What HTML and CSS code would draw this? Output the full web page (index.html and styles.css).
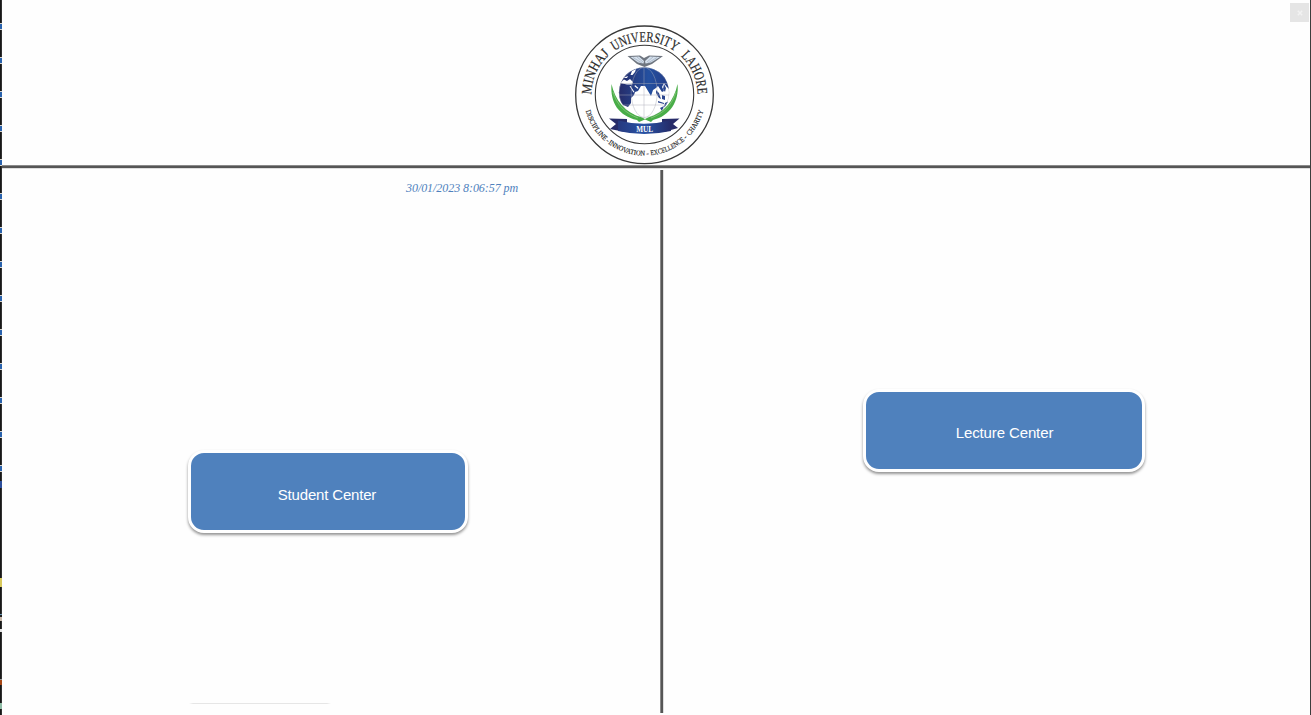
FILE: index.html
```html
<!DOCTYPE html>
<html lang="en">
<head>
<meta charset="utf-8">
<title>Minhaj University Lahore</title>
<link rel="stylesheet" href="styles.css">
</head>
<body>
<div class="edge-left">
  <div class="edge-ticks"></div>
  <i class="tick tick-blue"></i>
  <i class="tick tick-yellow"></i>
  <i class="tick tick-pink"></i>
  <i class="tick tick-white"></i>
  <i class="tick tick-brown"></i>
  <i class="tick tick-green"></i>
</div>
<div class="window">
  <header class="header">
    <svg class="logo" viewBox="9 10 141 140" role="img" aria-label="Minhaj University Lahore">
      <defs>
        <path id="arc-top" d="M26.5 79.7A53 53 0 0 1 132.5 79.7"/>
        <path id="arc-bottom" d="M18.5 79.7A61 61 0 0 0 140.5 79.7"/>
        <linearGradient id="navy" x1="0" x2="1"><stop offset="0" stop-color="#262b68"/><stop offset=".6" stop-color="#2450a0"/><stop offset="1" stop-color="#243c87"/></linearGradient>
        <linearGradient id="band" x1="0" x2="1"><stop offset="0" stop-color="#27397f"/><stop offset=".5" stop-color="#2853a5"/><stop offset="1" stop-color="#252b69"/></linearGradient>
        <clipPath id="globe"><circle cx="79.2" cy="77.5" r="25.3"/></clipPath>
      </defs>
      <circle cx="79.5" cy="79.8" r="68.8" fill="#fff" stroke="#383838" stroke-width="1.3"/>
      <circle cx="79.5" cy="79.5" r="49.2" fill="#fff" stroke="#383838" stroke-width="1.1"/>
      <g class="motto-top">
        <text><textPath href="#arc-top" startOffset="0" textLength="45" lengthAdjust="spacingAndGlyphs">MINHAJ</textPath></text>
        <text><textPath href="#arc-top" startOffset="51" textLength="65" lengthAdjust="spacingAndGlyphs">UNIVERSITY</textPath></text>
        <text><textPath href="#arc-top" startOffset="123" textLength="43" lengthAdjust="spacingAndGlyphs">LAHORE</textPath></text>
      </g>
      <g class="motto-bottom">
        <text><textPath href="#arc-bottom" startOffset="16.3" textLength="36" lengthAdjust="spacingAndGlyphs">DISCIPLINE</textPath></text>
        <text><textPath href="#arc-bottom" startOffset="53.300">-</textPath></text>
        <text><textPath href="#arc-bottom" startOffset="56.600" textLength="39.500" lengthAdjust="spacingAndGlyphs">INNOVATION</textPath></text>
        <text><textPath href="#arc-bottom" startOffset="97.800">-</textPath></text>
        <text><textPath href="#arc-bottom" startOffset="102" textLength="37.500" lengthAdjust="spacingAndGlyphs">EXCELLENCE</textPath></text>
        <text><textPath href="#arc-bottom" startOffset="141">-</textPath></text>
        <text><textPath href="#arc-bottom" startOffset="146" textLength="29" lengthAdjust="spacingAndGlyphs">CHARITY</textPath></text>
      </g>
      <circle cx="79.2" cy="77.500" r="25.3" fill="#fff"/>
      <g clip-path="url(#globe)">
        <path fill="url(#navy)" d="M53 77 54 66 60 56 74 51 90 53 99 60 102 67 104 74 101 71 99 68 97 72 99 76 97 77 93 71 91 73 88 75 86 81 83 76 80 71 76 71 73 76 70 77 69 80 66 83 66 88 63 92 58 90 53 83Z"/>
        <path fill="#fff" d="M55 68 59 64.500 62 66 65 64 68 67 67 69.500 62 69.500ZM67 56l4-2-1 3-2.500 3-2 0zM64.500 71l1 0 4 6-1 .5zM70 70l3.500 3-1 .8-3-2.500zM58 63l5-2-1 2z"/>
        <path fill="#2a458e" d="M91 75l3 3 2 6-2-1-3-5zM93 86l6 2 0 1-6-1.500zM97 80l3 1 0 4-3-1zM99 69l2 4-1 4-2-3zM100 88l4-2-1 4-4 2zM95 93l4-2-2 5z"/>
        <g fill="none" stroke="#a9adb8" stroke-width=".45"><path d="M55 68.500H104M54 80H105M57 90H102M79 52V103"/><ellipse cx="79.200" cy="77.500" rx="13" ry="25"/><circle cx="79.200" cy="77.500" r="25.100"/></g>
      </g>
      <path fill="#49ad48" d="M46.500 69C50 85 60 98 77 102.500L80 104 83 102.500C99 98 109 86 112.500 69 114.500 86 105 101 88 105L86 107 80 104.500 74 107 72 105C54 101 45 88 46.500 69Z"/>
      <path fill="none" stroke="#8fca83" stroke-width=".7" d="M48 77C52 90 60 98 73 103M111 77C107 90 99 98 86 103"/>
      <path fill="#6f7680" d="M62.500 41 75 40.500 79 43 84 40.500 98 41 87 49 79.500 52 72 49Z"/>
      <path fill="#d5e0ec" d="M65.500 42 74 41.500 79 46 78.500 48.500 73 47.500ZM95 42 85 41.500 80 46 80.500 48.500 86 47.500Z"/>
      <path d="M68 42.500 77 48M92 42.500 83 48M72 42l6 5M88 42l-6 5" stroke="#96a5b8" stroke-width=".6"/>
      <path fill="#272c69" d="M44 103.500 62 104V115L60 117 45 114 51 109ZM114.500 103.500 97 104V115L99 117 113 113 108 109Z"/>
      <path fill="url(#band)" d="M53 105.500Q79 112 105 105.500L106 116Q79 122 53 116Z"/>
      <text class="mul" x="79.700" y="117" textLength="17" lengthAdjust="spacingAndGlyphs">MUL</text>
    </svg>
    <button class="close" aria-label="Close"><svg width="6" height="6" viewBox="0 0 6 6"><path d="M.8.8 5.200 5.200M5.200.8.8 5.200" stroke="#f2f2f2" stroke-width="1.500"/></svg></button>
  </header>
  <div class="rule"></div>
  <main class="panes">
    <section class="pane student">
      <time class="clock">30/01/2023 8:06:57 pm</time>
      <button class="card">Student Center</button>
      <div class="faint-line"></div>
    </section>
    <div class="divider"></div>
    <section class="pane lecture">
      <button class="card">Lecture Center</button>
    </section>
  </main>
</div>
<div class="edge-right"></div>
</body>
</html>
```
FILE: styles.css
```css
* { box-sizing: border-box; }
body { margin: 0; height: 715px; display: flex; overflow: hidden; background: #fefefe; font-family: "Liberation Sans", Arial, sans-serif; }
button { border: 0; padding: 0; font: inherit; }

.edge-left { width: 2px; height: 715px; background: linear-gradient(90deg, #171717 1px, #303030 1px); display: flex; flex-direction: column; }
.edge-ticks { height: 476px; flex: none; background: repeating-linear-gradient(180deg, transparent 0 23px, #d8d5ce 23px 24px, #2962ad 24px 29px, #d8d5ce 29px 30px, transparent 30px 34px); }
.tick { flex: none; width: 2px; }
.tick-blue { height: 7px; margin-top: 5px; background: #2c4e9c; }
.tick-yellow { height: 9px; margin-top: 90px; background: #d8c95c; }
.tick-pink { height: 7px; margin-top: 27px; background: linear-gradient(#6796b5 1px, #222 1px 3px, #c8b8aa 3px); }
.tick-white { height: 3px; margin-top: 8px; background: #e5e5e5; }
.tick-brown { height: 6px; margin-top: 47px; background: linear-gradient(#999 1px, #a54615 1px); }
.tick-green { height: 6px; margin-top: 18px; background: #8fbca6; }
.edge-right { width: 1px; background: #3d3d3d; }

.window { width: 1308px; display: flex; flex-direction: column; }
.header { height: 165px; display: flex; justify-content: flex-end; align-items: flex-start; }
.logo { width: 141px; height: 140px; margin: 25px 575px 0 0; flex: none; }
.motto-top { font: 14.5px "Liberation Serif", serif; fill: #2b2b2b; stroke: #2b2b2b; stroke-width: .2px; }
.motto-bottom { font: 7.2px "Liberation Serif", serif; fill: #222; stroke: #222; stroke-width: .15px; }
.mul { font: bold 8.5px "Liberation Serif", serif; fill: #fff; text-anchor: middle; }
.close { width: 19px; height: 19px; margin: 3px 1px 0 0; background: #e5e5e5; display: grid; place-items: center; }

.rule { height: 4px; flex: none; background: linear-gradient(#8a8a8a 1px, #565656 1px 3px, #dedede 3px); }
.panes { flex: 1; display: flex; }
.pane { display: flex; flex-direction: column; align-items: flex-start; }
.student { width: 658px; }
.divider { width: 4px; height: 543px; margin-top: 1px; background: linear-gradient(90deg, #8a8a8a 1px, #565656 1px 3px, #dedede 3px); }
.clock { margin: 12px 0 0 404px; height: 15px; line-height: 15px; font-family: "Liberation Serif", serif; font-style: italic; font-size: 12px; letter-spacing: -.06px; color: #4f81bd; white-space: nowrap; }
.card { width: 280px; height: 83px; border: 3px solid #fff; border-radius: 16px; background: #4f81bd; color: #fff; font-size: 15px; letter-spacing: -.18px; box-shadow: 0 2px 3px rgba(0, 0, 0, .42); }
.student .card { margin: 254px 0 0 186px; padding: 5px 2px 0 0; }
.lecture .card { width: 282px; margin: 220px 0 0 199px; padding: 4px 0 0 1px; letter-spacing: -.12px; }
.faint-line { width: 142px; height: 1px; margin: 170px 0 0 187px; background: linear-gradient(90deg, transparent, #e6e6e6 4px 138px, transparent); }
```
